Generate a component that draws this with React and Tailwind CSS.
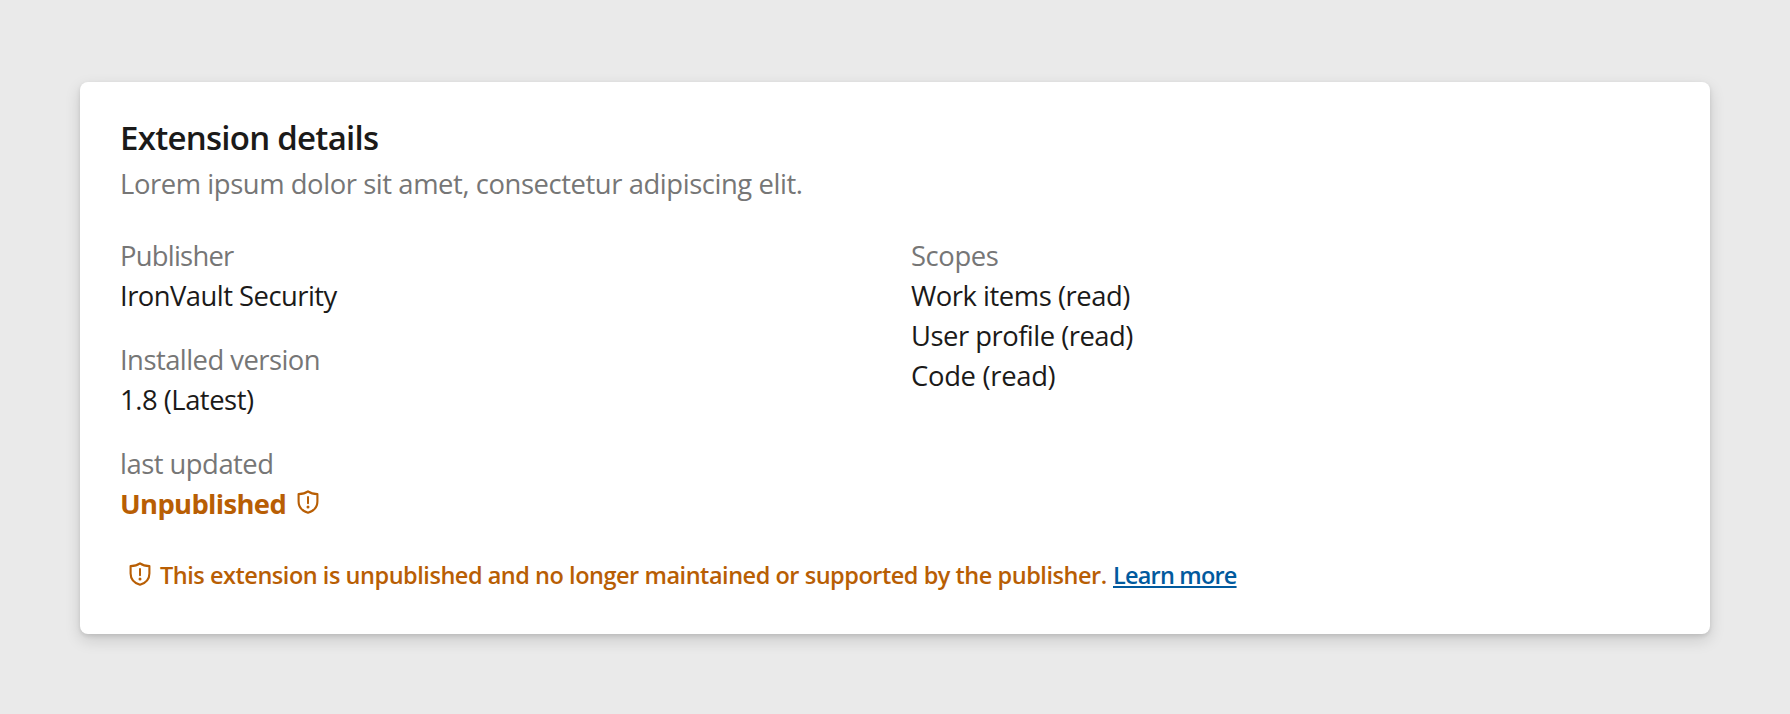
function ShieldAlert({ className }) {
  return (
    <svg viewBox="0 0 22 24" className={className} fill="none" stroke="currentColor">
      <path d="M11 1.3C8.6 3.1 5.2 4 1.6 4.1V11.4C1.6 17 5.2 20.9 11 22.8C16.8 20.9 20.4 17 20.4 11.4V4.1C16.8 4 13.4 3.1 11 1.3Z" strokeWidth="2.1" strokeLinejoin="round" />
      <path d="M11 7V13.2" strokeWidth="2" strokeLinecap="round" />
      <circle cx="11" cy="17" r="1.5" fill="currentColor" stroke="none" />
    </svg>
  );
}

function Label({ children, className }) {
  return <dt className={`text-[#767676] ${className}`}>{children}</dt>;
}

export default function App() {
  return (
    <main className="h-[714px] bg-[#eaeaea] px-20 pt-[82px] font-['Open_Sans',sans-serif] text-[27.4px] leading-10 text-[#1b1a19]">
      <section className="h-[552px] rounded-lg bg-white pl-10 pt-8 whitespace-nowrap shadow-[0_6px_16px_rgba(0,0,0,0.14),0_2px_4px_rgba(0,0,0,0.1)]">
        <h1 className="h-[50px] text-[33px] leading-[48px] font-semibold tracking-[-0.73px]">Extension details</h1>
        <p className="h-10 tracking-[-0.42px] text-[#767676]">Lorem ipsum dolor sit amet, consectetur adipiscing elit.</p>
        <div className="mt-8 flex">
          <dl className="flex w-[791px] flex-col gap-6">
            <div>
              <Label className="tracking-[-0.75px]">Publisher</Label>
              <dd className="tracking-[-0.52px]">IronVault Security</dd>
            </div>
            <div>
              <Label className="tracking-[-0.53px]">Installed version</Label>
              <dd className="tracking-[-0.48px]">1.8 (Latest)</dd>
            </div>
            <div>
              <Label className="tracking-[-0.5px]">last updated</Label>
              <dd className="flex text-[#b85e04]">
                <span className="w-[177px] font-bold tracking-[-0.65px]">Unpublished</span>
                <ShieldAlert className="mt-[6px] h-6 w-[22px]" />
              </dd>
            </div>
          </dl>
          <dl>
            <Label className="tracking-[-0.4px]">Scopes</Label>
            <dd className="tracking-[-0.47px]">Work items (read)</dd>
            <dd className="tracking-[-0.5px]">User profile (read)</dd>
            <dd className="tracking-[-0.3px]">Code (read)</dd>
          </dl>
        </div>
        <div className="mt-[31px] flex pl-[9px] text-[23.5px] font-semibold text-[#b85e04]">
          <ShieldAlert className="mt-[7px] h-6 w-[22px]" />
          <p className="ml-[9px] w-[953px] tracking-[-0.47px]">This extension is unpublished and no longer maintained or supported by the publisher.</p>
          <a href="#" className="text-[#015a9e] tracking-[-0.8px] underline decoration-[1.5px] underline-offset-[2px]">Learn more</a>
        </div>
      </section>
    </main>
  );
}
